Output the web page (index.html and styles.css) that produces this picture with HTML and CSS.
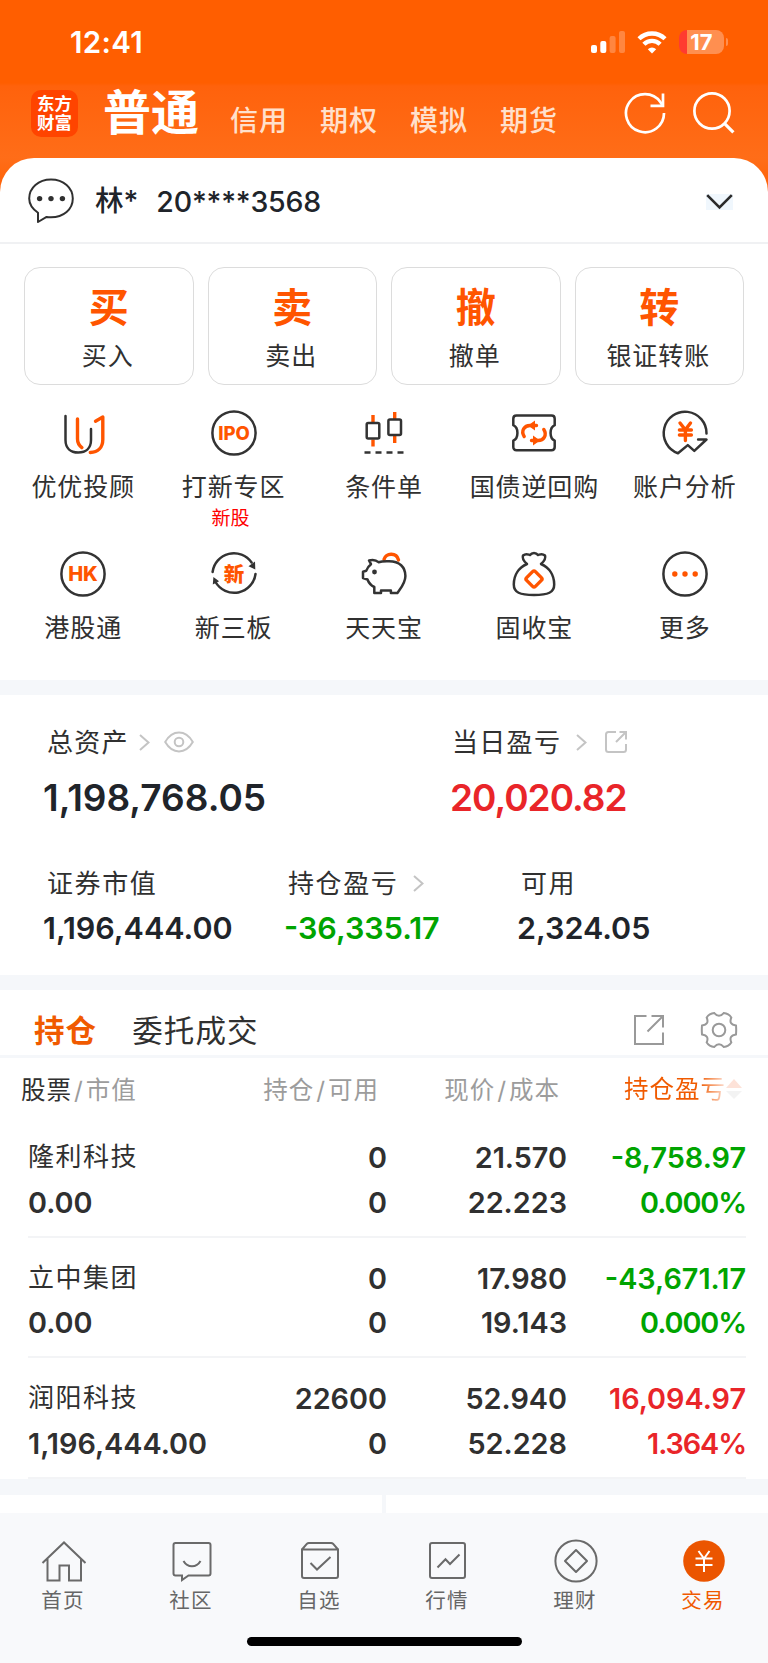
FILE: index.html
```html
<!DOCTYPE html>
<html lang="zh-CN">

<head>
  <meta charset="UTF-8">
  <meta name="viewport" content="width=device-width, initial-scale=1.0">
  <title>交易</title>
  <link rel="stylesheet" href="styles.css">
</head>

<body>
  <div class="status-bar">
    <span class="time">12:41</span>
    <div class="status-icons">
      <svg class="signal" width="34" height="22" viewBox="0 0 34 22" fill="#fff">
        <rect x="0" y="14" width="6" height="8" rx="2" />
        <rect x="9.3" y="10" width="6" height="12" rx="2" />
        <rect x="18.6" y="5" width="6" height="17" rx="2" opacity=".25" />
        <rect x="28" y="0" width="6" height="22" rx="2" opacity=".25" />
      </svg>
      <svg class="wifi" width="30" height="23" viewBox="0 0 30 23" fill="none" stroke="#fff" stroke-width="4.4">
        <path d="M2 7.8a18.6 18.6 0 0 1 26 0" />
        <path d="M6.9 13.2a11.5 11.5 0 0 1 16.2 0" />
        <path d="M15 22.6l-4.2-4.4a6.2 6.2 0 0 1 8.4 0z" fill="#fff" stroke="none" />
      </svg>
      <div class="battery"><span>17</span></div>
      <div class="battery-cap"></div>
    </div>
  </div>

  <header class="header">
    <div class="logo">东方<br>财富</div>
    <nav class="modes">
      <span class="mode-active">普通</span>
      <span>信用</span>
      <span>期权</span>
      <span>模拟</span>
      <span>期货</span>
    </nav>
    <svg class="refresh" width="42" height="42" viewBox="0 0 42 42" fill="none" stroke="#fff" stroke-width="2.7">
      <path d="M40 21A19 19 0 1 1 36.500 10.200L39 14" />
      <path d="M39 1.500v12.300H26.500" />
    </svg>
    <svg class="search" width="42" height="42" viewBox="0 0 42 42" fill="none" stroke="#fff" stroke-width="2.7">
      <circle cx="19" cy="19" r="17.600" />
      <path d="M31.400 31.400l9 9" stroke-width="3.200" />
    </svg>
  </header>

  <main class="panel">
    <div class="account">
      <svg width="46" height="46" viewBox="0 0 46 46" fill="none" stroke="#303030" stroke-width="2">
        <path d="M10 44v-9.200C4.600 31 1.200 26 1.200 20.500 1.200 9.600 10.500 1.500 23 1.500s21.800 8.100 21.800 19-9.300 18.800-21.800 18.800c-1.600 0-3-.1-4.400-.4z" stroke-linejoin="round" />
        <g fill="#303030" stroke="none">
          <circle cx="11.600" cy="20.600" r="2.700" />
          <circle cx="23" cy="20.600" r="2.700" />
          <circle cx="34.400" cy="20.600" r="2.700" />
        </g>
      </svg>
      <span class="account-name">林*</span>
      <span class="account-no">20****3568</span>
      <svg class="account-arrow" width="27" height="16" viewBox="0 0 27 16" fill="none" stroke="#2b2b2b" stroke-width="2.600">
        <path d="M1.200 1.200l12.300 12.200L25.800 1.200" />
      </svg>
    </div>

    <div class="cards">
      <div class="card"><b>买</b><span>买入</span></div>
      <div class="card"><b>卖</b><span>卖出</span></div>
      <div class="card"><b>撤</b><span>撤单</span></div>
      <div class="card"><b>转</b><span>银证转账</span></div>
    </div>

    <div class="tools">
      <div class="tool">
        <svg viewBox="0 0 48 48">
          <path class="ink" d="M6.500 7v24c0 8 5 12.500 12.700 12.500S32 39 32 31V20" />
          <path class="hot" d="M18.500 10v20c0 4 1.600 6.500 4.400 8.600M36.500 12.200l7.300-4.100v22.400c0 8-4.800 12.700-12.500 13" />
        </svg>
        <span>优优投顾</span>
      </div>
      <div class="tool">
        <svg viewBox="0 0 48 48">
          <circle class="ink" cx="24" cy="24" r="21.600" />
          <text class="icon-text ipo" x="24" y="30.800">IPO</text>
        </svg>
        <span>打新专区</span>
        <em>新股</em>
      </div>
      <div class="tool">
        <svg viewBox="0 0 48 48">
          <path class="hot flat" d="M13 6v7M13 30.500v7M34.700 3v7M34.700 27v7" />
          <rect class="ink" x="6.700" y="14" width="12.600" height="15.500" rx="1.500" />
          <rect class="ink" x="28.400" y="10.500" width="12.600" height="15.500" rx="1.500" />
          <path class="ink flat" d="M4.500 43.500h6M15.500 43.500h6M26.500 43.500h6M37.500 43.500h6" />
        </svg>
        <span>条件单</span>
      </div>
      <div class="tool">
        <svg viewBox="0 0 48 48">
          <path class="ink" d="M6.500 6.500h35c2 0 3.200 1.200 3.200 3.200v6.500c-5.500 2.500-5.500 13 0 15.500V38c0 2-1.200 3.200-3.200 3.200h-35c-2 0-3.200-1.200-3.200-3.200v-6.300c5.500-2.500 5.500-13 0-15.500V9.700c0-2 1.200-3.200 3.200-3.200z" />
          <path class="hot" d="M14.200 27.500c-3.500-5.500 0-11 5.800-11h6.500M33.800 20.500c3.500 5.500 0 11-5.800 11h-6.500" />
          <path class="hot-fill" d="M18 16.500l7-5v10zM30 31.500l-7-5v10z" />
        </svg>
        <span>国债逆回购</span>
      </div>
      <div class="tool">
        <svg viewBox="0 0 48 48">
          <path class="ink" d="M45.500 24.500A21.400 21.400 0 1 0 17 44.300l9.800-8.200 6.500 5.800 12.200-11.400h-8.400" />
          <path class="hot" d="M19 14l5.300 6.800L29.500 14M18.400 21h12M18.400 26h12M24.400 21v10.500" />
        </svg>
        <span>账户分析</span>
      </div>
      <div class="tool">
        <svg viewBox="0 0 48 48">
          <circle class="ink" cx="24" cy="24" r="21.600" />
          <text class="icon-text hk" x="24" y="31.400">HK</text>
        </svg>
        <span>港股通</span>
      </div>
      <div class="tool">
        <svg viewBox="0 0 48 48">
          <path class="ink" d="M2.600 22a21.500 21.500 0 0 1 39-9.500M45.500 24a21.500 21.500 0 0 1-40 8" />
          <path class="ink-fill" d="M45 11.500l.3 8-6.800-3.200zM2.800 34.500l.6-7.500 5.700 4.200z" />
          <text class="icon-text xin" x="24" y="31.500">新</text>
        </svg>
        <span>新三板</span>
      </div>
      <div class="tool">
        <svg viewBox="0 0 48 48">
          <path class="hot" d="M24 9.500c1.500-6.500 12.500-7.500 14.500.5" />
          <path class="ink" d="M9 10.500c4-1.200 7-.6 9.500 1.700 3.500-1.200 6-1 10.500-1C39.500 11.200 45.400 17 45.400 26c0 7-4 11.300-8 17h-6.500v-2.500H21V43h-6.700v-6C11 35.500 8.800 33 7.500 29.500L3 28v-6.300l3.300-1c1-3 2.300-4.700 4.700-6.500z" />
          <circle class="ink-fill" cx="14.500" cy="22" r="2.400" />
        </svg>
        <span>天天宝</span>
      </div>
      <div class="tool">
        <svg viewBox="0 0 48 48">
          <path class="ink" d="M17 14c-3.500-3-5-5.500-4-8.500 3-2.500 5-1 7-.5 2-2.800 6-2.800 8 0 2-.5 4-2 7 .5 1 3-.5 5.500-4 8.500 8 3.500 13.200 11 13.200 20.500 0 8-6 10.500-20.200 10.500S3.800 42.500 3.800 34.500C3.800 25 9 17.500 17 14z" />
          <rect class="hot" x="17.800" y="22.800" width="12.400" height="12.400" rx="2" transform="rotate(45 24 29)" />
        </svg>
        <span>固收宝</span>
      </div>
      <div class="tool">
        <svg viewBox="0 0 48 48">
          <circle class="ink" cx="24" cy="24" r="21.600" />
          <circle class="hot-fill" cx="13.800" cy="24" r="2.700" />
          <circle class="hot-fill" cx="24" cy="24" r="2.700" />
          <circle class="hot-fill" cx="34.200" cy="24" r="2.700" />
        </svg>
        <span>更多</span>
      </div>
    </div>
  </main>

  <section class="assets">
    <div class="asset-row">
      <div class="asset total">
        <div class="asset-label">总资产
          <svg class="chevron" width="11" height="17" viewBox="0 0 11 17"><path d="M1 1l8.500 7.500L1 16" /></svg>
          <svg class="eye" width="30" height="22" viewBox="0 0 30 22">
            <path d="M1.200 11C5 4.500 9.500 1.600 15 1.600S25 4.500 28.800 11C25 17.500 20.500 20.400 15 20.400S5 17.500 1.200 11z" />
            <circle cx="15" cy="11" r="4.300" />
          </svg>
        </div>
        <div class="asset-value">1,198,768.05</div>
      </div>
      <div class="asset today">
        <div class="asset-label">当日盈亏
          <svg class="chevron" width="11" height="17" viewBox="0 0 11 17"><path d="M1 1l8.500 7.500L1 16" /></svg>
          <svg class="share" width="24" height="24" viewBox="0 0 24 24">
            <path d="M12 2H4.500C3 2 2 3 2 4.500v15C2 21 3 22 4.500 22h15c1.500 0 2.500-1 2.500-2.500V14M15.500 2H22v7.500M22 2L12 12" />
          </svg>
        </div>
        <div class="asset-value up">20,020.82</div>
      </div>
    </div>
    <div class="asset-row small">
      <div class="asset">
        <div class="asset-label">证券市值</div>
        <div class="asset-value">1,196,444.00</div>
      </div>
      <div class="asset">
        <div class="asset-label">持仓盈亏
          <svg class="chevron" width="11" height="17" viewBox="0 0 11 17"><path d="M1 1l8.500 7.500L1 16" /></svg>
        </div>
        <div class="asset-value down">-36,335.17</div>
      </div>
      <div class="asset">
        <div class="asset-label">可用</div>
        <div class="asset-value">2,324.05</div>
      </div>
    </div>
  </section>

  <section class="positions">
    <div class="tabs">
      <span class="tab-active">持仓</span>
      <span>委托成交</span>
      <svg class="tab-share" width="30" height="30" viewBox="0 0 30 30">
        <path d="M12.500 1H1v28h28V17.500M17.500 1H29v11.500M29 1L13.500 16.500" />
      </svg>
      <svg class="gear" width="38" height="38" viewBox="-19 -19 38 38">
        <path d="M17 4.400Q9.400 5.400 12.300 12.500Q9.800 16.500 4.700 16.900Q0 11.500-4.700 16.900Q-9.800 16.500-12.300 12.500Q-9.400 5.400-17 4.400Q-17.400 0-17-4.400Q-9.400-5.400-12.300-12.500Q-9.800-16.500-4.700-16.900Q0-11.500 4.700-16.900Q9.800-16.500 12.300-12.500Q9.400-5.400 17-4.400Q17.400 0 17 4.400z" />
        <circle r="6.300" />
      </svg>
    </div>

    <div class="row head">
      <div><b>股票</b><i>/</i>市值</div>
      <div>持仓<i>/</i>可用</div>
      <div>现价<i>/</i>成本</div>
      <div class="sorted"><span>持仓盈亏</span>
        <svg width="16" height="22" viewBox="0 0 16 22"><path d="M0 10l8-9 8 9z" fill="#fde2d8" /><path d="M0 13l8 8 8-8z" fill="#f3f3f3" /></svg>
      </div>
    </div>

    <div class="list">
      <div class="row">
        <div><span class="stock">隆利科技</span>0.00</div>
        <div>0<br>0</div>
        <div>21.570<br>22.223</div>
        <div class="down">-8,758.97<br><span class="pct">0.000%</span></div>
      </div>
      <div class="row">
        <div><span class="stock">立中集团</span>0.00</div>
        <div>0<br>0</div>
        <div>17.980<br>19.143</div>
        <div class="down">-43,671.17<br><span class="pct">0.000%</span></div>
      </div>
      <div class="row">
        <div><span class="stock">润阳科技</span>1,196,444.00</div>
        <div>22600<br>0</div>
        <div>52.940<br>52.228</div>
        <div class="up">16,094.97<br><span class="pct">1.364%</span></div>
      </div>
    </div>
  </section>

  <div class="next-cards"><div></div><div></div></div>

  <footer class="bottom">
    <nav class="nav">
      <div class="nav-item">
        <svg viewBox="0 0 46 46"><path d="M1.500 25L23 4.500 44.500 25M6.500 21v21.500h12V27.500h9.500v15h12V21" /></svg>
        <span>首页</span>
      </div>
      <div class="nav-item">
        <svg viewBox="0 0 46 46"><path d="M6.500 5h33c1.300 0 2 .7 2 2v28.500c0 1.300-.7 2-2 2H19.500L13 42v-4.500H6.500c-1.300 0-2-.7-2-2V7c0-1.300.7-2 2-2zM14.500 23c4 7 13 7 17 0" /></svg>
        <span>社区</span>
      </div>
      <div class="nav-item">
        <svg viewBox="0 0 46 46"><path d="M5 11.500h36V38c0 1.300-.7 2-2 2H7c-1.300 0-2-.7-2-2zl5-5.800c.5-.5 1-.7 1.800-.7h22.400c.8 0 1.300.2 1.800.7l5 5.800M13.500 25l6.500 6.500L33.500 19" /></svg>
        <span>自选</span>
      </div>
      <div class="nav-item">
        <svg viewBox="0 0 46 46"><rect x="5" y="5" width="35" height="35" rx="2" /><path d="M12.500 29.500l8-8.200 4.500 4.700 9.500-9.500" /></svg>
        <span>行情</span>
      </div>
      <div class="nav-item">
        <svg viewBox="0 0 46 46"><circle cx="23" cy="23" r="20.600" /><path d="M23 12l11 11-11 11-11-11z" stroke-linejoin="round" /></svg>
        <span>理财</span>
      </div>
      <div class="nav-item nav-active">
        <svg viewBox="0 0 46 46"><circle class="disc" cx="23" cy="23" r="20.800" /><path class="yen" d="M17.500 13l5.500 7.500 5.500-7.500M14.500 20.500h17M14.500 27h17M23 20.500V34" /></svg>
        <span>交易</span>
      </div>
    </nav>
    <div class="home-indicator"></div>
  </footer>
</body>

</html>
```
FILE: styles.css
```css
* {
  box-sizing: border-box;
}

body {
  margin: 0;
  width: 768px;
  height: 1663px;
  overflow: hidden;
  font-family: Inter, "Noto Sans CJK SC", sans-serif;
  color: #303030;
  background: linear-gradient(#ff5e00 0, #ff5e00 83px, #ff620c 86px, #ff6d18 158px, #ff5e00 200px);
}

svg {
  display: block;
  flex: none;
}

.up {
  color: #e92529;
}

.down {
  color: #00a400;
}

/* status bar */
.status-bar {
  height: 83px;
  padding: 0 40px 0 70px;
  display: flex;
  justify-content: space-between;
  color: #fff;
}

.time {
  font-size: 29.5px;
  font-weight: 600;
  line-height: 84px;
  letter-spacing: 0.3px;
}

.status-icons {
  display: flex;
  align-items: center;
  height: 84px;
}

.wifi {
  margin: 0 12px 0 12px;
}

.battery {
  width: 45px;
  height: 24px;
  border-radius: 8px;
  background: linear-gradient(90deg, #ff3b30 8px, #ff8f50 8px);
  font-size: 22px;
  font-weight: 700;
  line-height: 24px;
  text-align: center;
}

.battery-cap {
  width: 2px;
  height: 8px;
  margin-left: 2px;
  border-radius: 0 2px 2px 0;
  background: #ff8f50;
}

/* header */
.header {
  height: 75px;
  padding: 0 33px 15px 31px;
  display: flex;
  align-items: center;
  color: #fff;
}

.logo {
  width: 47px;
  height: 47px;
  padding-top: 4px;
  border-radius: 10px;
  background: #ff4400;
  font-size: 17.5px;
  font-weight: 700;
  line-height: 19.5px;
  text-align: center;
}

.modes {
  flex: 1;
  display: flex;
  align-items: center;
  margin-left: 25px;
}

.modes span {
  margin: 16px 32px 0 0;
  font-size: 28px;
  line-height: 40px;
  letter-spacing: 1px;
  color: #ffe0cc;
  font-weight: 500;
}

.modes .mode-active {
  margin: 0 31px 0 0;
  font-size: 48px;
  font-weight: 700;
  letter-spacing: 0;
  color: #fff;
}

.search {
  margin-left: 27px;
}

/* main panel */
.panel {
  height: 522px;
  border-radius: 34px 34px 0 0;
  background: #fff;
}

.account {
  height: 86px;
  padding: 1px 35px 0 28px;
  display: flex;
  align-items: center;
  border-bottom: 2px solid #f0f1f3;
  font-size: 28.5px;
  font-weight: 500;
  color: #20242a;
}

.account-name {
  margin: 0 0 4px 21px;
}

.account-no {
  margin: 1px 0 0 18px;
  letter-spacing: -0.2px;
}

.account-arrow {
  margin: 2px 0 0 auto;
  background: #f0f7fd;
}

.cards {
  display: grid;
  grid-template-columns: repeat(4, 1fr);
  gap: 14px;
  padding: 23px 24px 0;
}

.card {
  height: 118px;
  padding-top: 18px;
  border: 1.5px solid #dcdcdc;
  border-radius: 16px;
  text-align: center;
}

.card b {
  display: block;
  font-size: 40px;
  font-weight: 700;
  line-height: 44px;
  color: #ff5500;
}

.card span {
  display: block;
  margin: 9px 2px 0 0;
  font-size: 25px;
  line-height: 34px;
  letter-spacing: 0.9px;
}

.tools {
  display: grid;
  grid-template-columns: repeat(5, 1fr);
  grid-auto-rows: 141px;
  padding: 24px 8px 0;
}

.tool {
  display: flex;
  flex-direction: column;
  align-items: center;
}

.tool svg {
  width: 48px;
  height: 48px;
}

.tool span {
  margin-top: 14px;
  font-size: 25px;
  line-height: 32px;
  letter-spacing: 0.9px;
  white-space: nowrap;
}

.tool em {
  margin: 1px 6px 0 0;
  font-size: 19px;
  font-style: normal;
  line-height: 30px;
  color: #ff0000;
}

.ink,
.hot {
  fill: none;
  stroke: #333;
  stroke-width: 2.5;
  stroke-linecap: round;
  stroke-linejoin: round;
}

.hot {
  stroke: #ff5500;
  stroke-width: 3.4;
}

.flat {
  stroke-linecap: butt;
}

.ink-fill {
  fill: #333;
}

.hot-fill {
  fill: #ff5500;
}

.icon-text {
  fill: #ff5500;
  font-weight: 800;
  text-anchor: middle;
}

.ipo {
  font-size: 18.5px;
}

.hk {
  font-size: 20px;
}

.xin {
  font-size: 20.5px;
}

/* assets */
.assets {
  height: 310px;
  padding: 31px 0 0 43px;
  border-top: 15px solid #f5f7fa;
  border-bottom: 15px solid #f5f7fa;
  background: #fff;
}

.asset-row {
  display: grid;
  grid-template-columns: 407px 1fr;
}

.asset-row.small {
  grid-template-columns: 241px 233px 1fr;
  margin-top: 49px;
}

.asset-label {
  display: flex;
  align-items: center;
  padding-left: 4px;
  height: 32px;
  font-size: 26px;
  line-height: 29px;
  letter-spacing: 1.3px;
}

.small .asset-label {
  letter-spacing: 1.6px;
}

.today .asset-label {
  padding-left: 2px;
}

.asset-value {
  margin-top: 20px;
  font-size: 37px;
  font-weight: 600;
  line-height: 40px;
  color: #20242a;
}

.today .asset-value {
  letter-spacing: -1px;
}

.small .asset-value {
  margin-top: 11px;
  font-size: 30.5px;
  line-height: 36px;
}

.asset-value.up {
  color: #e92529;
}

.asset-value.down {
  color: #00a400;
}

.chevron,
.eye,
.share {
  fill: none;
  stroke: #c4c4c4;
  stroke-width: 2;
}

.chevron {
  margin-left: 10px;
}

.asset:not(.total) .chevron {
  margin-left: 15px;
}

.eye {
  margin-left: 14px;
}

.share {
  margin-left: 17px;
}

/* positions */
.positions {
  background: #fff;
}

.tabs {
  height: 68px;
  padding: 12px 30px 0 34px;
  display: flex;
  align-items: center;
  border-bottom: 3px solid #f5f7fa;
  font-size: 30.5px;
  letter-spacing: 1.1px;
}

.tabs span {
  margin-left: 35px;
}

.tabs .tab-active {
  margin-left: 0;
  font-weight: 700;
  color: #f05a00;
}

.tab-share,
.gear {
  margin-top: 2px;
  fill: none;
  stroke: #999;
  stroke-width: 2;
}

.tab-share {
  margin-left: auto;
}

.gear {
  margin-left: 36px;
}

.row {
  display: grid;
  grid-template-columns: 186px 173px 180px 1fr;
  height: 120.5px;
  padding-top: 19px;
  border-bottom: 2px solid #f3f4f6;
  font-size: 28.8px;
  font-weight: 600;
  line-height: 44.5px;
  text-align: right;
}

.row > div:first-child {
  text-align: left;
  white-space: nowrap;
}

.list {
  padding: 0 22px 0 28px;
}

.stock {
  display: block;
  height: 44.5px;
  font-size: 26px;
  font-weight: 400;
  line-height: 42px;
  letter-spacing: 1.5px;
}

.pct {
  letter-spacing: -1.1px;
}

.head {
  grid-template-columns: 178px 180px 181px 1fr;
  height: 59px;
  padding: 10px 26px 0 21px;
  border: 0;
  font-size: 24.5px;
  font-weight: 400;
  letter-spacing: 1px;
  color: #9c9c9c;
}

.head b {
  font-weight: 400;
  color: #303030;
}

.head i {
  margin: 0 2px;
  font-style: normal;
}

.sorted {
  height: 42px;
  display: flex;
  align-items: center;
  justify-content: flex-end;
}

.sorted span {
  color: transparent;
  background: linear-gradient(90deg, #f05a00 74%, #fde2d8 100%);
  -webkit-background-clip: text;
  background-clip: text;
}

/* strip of the two cards that start below the list */
.next-cards {
  display: grid;
  grid-template-columns: 382px 1fr;
  gap: 4px;
  height: 34.5px;
  padding: 16px 0 0;
  background: #f5f7fa;
}

.next-cards div {
  background: #fff;
}

/* bottom bar */
.bottom {
  height: 150px;
  padding-top: 25px;
  background: #f8f9fb;
}

.nav {
  display: grid;
  grid-template-columns: repeat(6, 1fr);
}

.nav-item {
  display: flex;
  flex-direction: column;
  align-items: center;
  font-size: 20.5px;
  line-height: 30px;
  letter-spacing: 1.2px;
  color: #666;
}

.nav-item svg {
  width: 46px;
  height: 46px;
  fill: none;
  stroke: #6a6a6a;
  stroke-width: 2;
}

.nav-item span {
  margin: 2px 2px 0 0;
}

.nav-item.nav-active {
  color: #f05a00;
}

.nav-item .disc {
  fill: #eb5500;
  stroke: none;
}

.nav-item .yen {
  stroke: #fff;
  stroke-width: 2;
}

.home-indicator {
  width: 275px;
  height: 9px;
  margin: 21px auto 0;
  border-radius: 5px;
  background: #000;
}
```
